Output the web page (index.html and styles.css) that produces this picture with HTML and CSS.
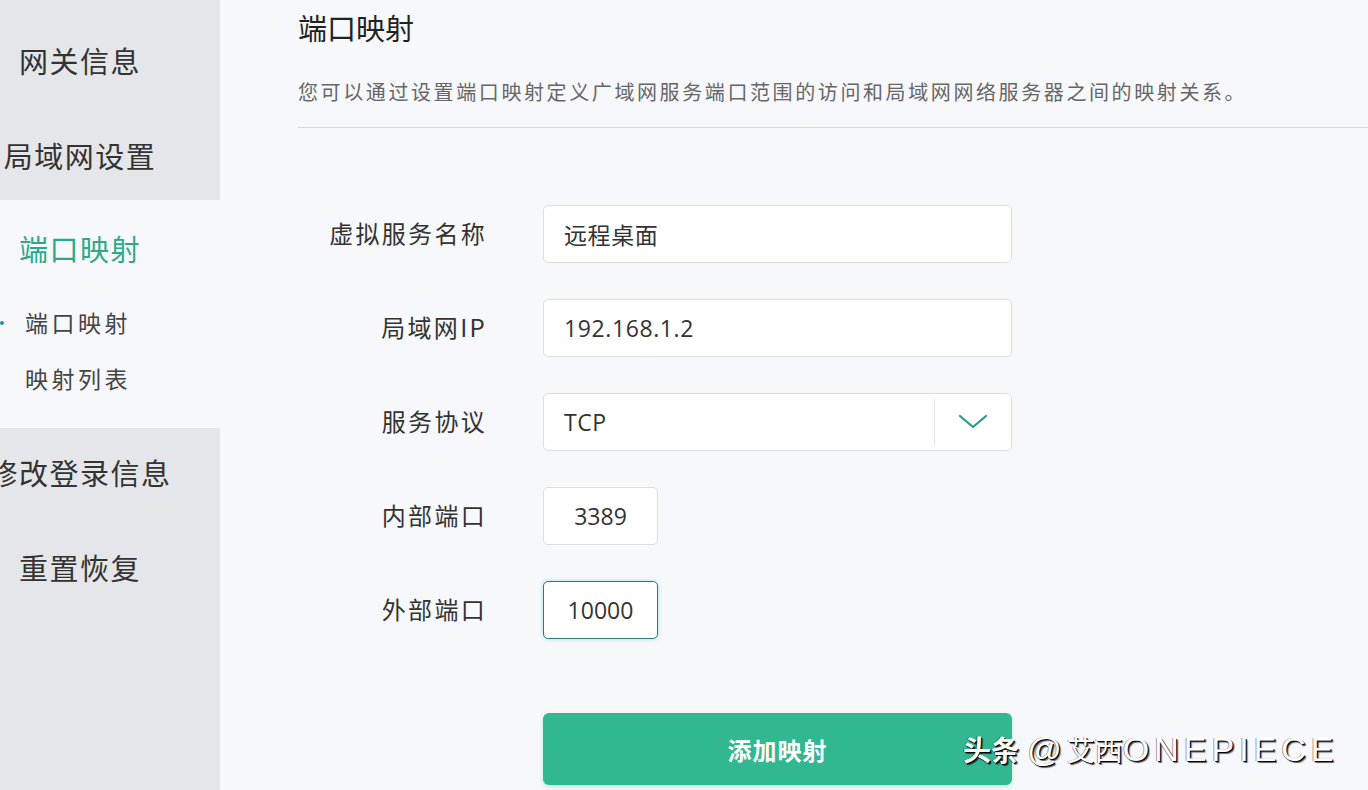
FILE: index.html
```html
<!DOCTYPE html>
<html lang="zh-CN">
<head>
<meta charset="utf-8">
<title>端口映射</title>
<link rel="stylesheet" href="styles.css">
</head>
<body>
<div class="page">
  <aside class="sidebar">
    <div class="group group-top">
      <div class="nav-item">网关信息</div>
      <div class="nav-item">局域网设置</div>
    </div>
    <div class="group group-open">
      <div class="nav-item nav-active">端口映射</div>
      <div class="sub-item sub-current"><span class="dot"></span>端口映射</div>
      <div class="sub-item">映射列表</div>
    </div>
    <div class="group group-bottom">
      <div class="nav-item nav-first">修改登录信息</div>
      <div class="nav-item">重置恢复</div>
    </div>
  </aside>
  <main class="main">
    <h1 class="title">端口映射</h1>
    <p class="desc">您可以通过设置端口映射定义广域网服务端口范围的访问和局域网网络服务器之间的映射关系。</p>
    <div class="divider"></div>
    <form class="form">
      <label class="label">虚拟服务名称</label>
      <div class="field field-wide">远程桌面</div>
      <label class="label">局域网IP</label>
      <div class="field field-wide">192.168.1.2</div>
      <label class="label">服务协议</label>
      <div class="field field-wide select">
        <span class="select-value">TCP</span>
        <span class="select-arrow">
          <svg width="30" height="16" viewBox="0 0 30 16"><path d="M2 2 L15 13 L28 2" fill="none" stroke="#2a9a8e" stroke-width="2.2" stroke-linecap="round" stroke-linejoin="round"/></svg>
        </span>
      </div>
      <label class="label">内部端口</label>
      <div class="field field-small">3389</div>
      <label class="label">外部端口</label>
      <div class="field field-small field-focus">10000</div>
      <button type="button" class="btn">添加映射</button>
    </form>
  </main>
</div>
<div class="watermark"><b>头条</b> <span class="wm-latin">@</span>艾西<span class="wm-latin">ONEPIECE</span></div>
</body>
</html>
```

FILE: styles.css
```css
html, body {
  margin: 0;
  padding: 0;
  background: #f7f8fb;
  font-family: "Noto Sans CJK SC", "Open Sans", sans-serif;
  color: #333;
  overflow: hidden;
}
.page {
  display: flex;
  width: 1368px;
  height: 790px;
  overflow: hidden;
}
.sidebar {
  width: 220px;
  flex: none;
  display: flex;
  flex-direction: column;
  background: #f7f8fb;
}
.group-top {
  background: #e5e6e9;
  height: 200px;
  padding-top: 12px;
  box-sizing: border-box;
}
.group-open {
  height: 228px;
}
.group-bottom {
  background: #e5e6e9;
  flex: 1;
}
.nav-item {
  width: 160px;
  height: 95px;
  display: flex;
  align-items: center;
  justify-content: center;
  white-space: nowrap;
  font-size: 29px;
  letter-spacing: 1.5px;
  color: #333;
}
.nav-first {
  margin-top: -4px;
}
.nav-active {
  height: 96px;
  color: #2ea88a;
}
.sub-item {
  height: 56px;
  display: flex;
  align-items: center;
  padding-left: 25px;
  font-size: 23px;
  letter-spacing: 3.5px;
  color: #444;
  position: relative;
  margin-top: -2px;
  margin-bottom: 2px;
}
.dot {
  position: absolute;
  left: 0;
  top: 27px;
  width: 4px;
  height: 4px;
  border-radius: 50%;
  background: #2a8ea0;
}
.main {
  flex: 1;
  padding-left: 78px;
}
.title {
  margin: 8px 0 0;
  height: 38px;
  line-height: 38px;
  font-size: 29px;
  font-weight: normal;
  color: #222;
}
.desc {
  margin: 31px 0 0;
  height: 30px;
  line-height: 30px;
  font-size: 20px;
  letter-spacing: 2.6px;
  color: #666;
  white-space: nowrap;
}
.divider {
  margin-top: 20px;
  height: 1px;
  background: #d6d9de;
}
.form {
  margin-top: 77px;
  display: grid;
  grid-template-columns: 187px 469px;
  column-gap: 58px;
  row-gap: 36px;
  align-items: center;
}
.label {
  justify-self: end;
  font-size: 24px;
  letter-spacing: 2.3px;
  color: #333;
  white-space: nowrap;
  margin-top: -4px;
  margin-right: -2px;
}
.field {
  height: 58px;
  box-sizing: border-box;
  background: #fff;
  border: 1px solid #dcdfe4;
  border-radius: 5px;
  display: flex;
  align-items: center;
  font-family: "Open Sans", "Noto Sans CJK SC", sans-serif;
  font-size: 23px;
  color: #333;
}
.field-wide {
  width: 469px;
  padding-left: 20px;
  letter-spacing: 0.6px;
}
.field-small {
  width: 115px;
  justify-content: center;
}
.field-focus {
  border: 1.5px solid #2d7c7a;
  box-shadow: 0 0 4px rgba(60, 200, 200, 0.45);
}
.select {
  padding-left: 20px;
}
.select-value {
  flex: 1;
}
.select-arrow {
  width: 76px;
  height: 46px;
  border-left: 1px solid #e3e5e8;
  display: flex;
  align-items: center;
  justify-content: center;
}
.btn {
  grid-column: 2;
  margin-top: 38px;
  width: 469px;
  height: 72px;
  border: none;
  border-radius: 6px;
  background: #31b890;
  box-shadow: 0 2px 4px rgba(60, 210, 160, 0.35);
  color: #fff;
  font-family: "Noto Sans CJK SC", sans-serif;
  font-size: 24px;
  font-weight: bold;
  letter-spacing: 1px;
}
.watermark {
  position: absolute;
  left: 963px;
  top: 728px;
  font-family: "Noto Sans CJK SC", sans-serif;
  font-size: 28px;
  line-height: 42px;
  color: #fff;
  white-space: nowrap;
  text-shadow: 1px 1px 0 #000, 2px 2px 1px rgba(0,0,0,0.6), -1px 0 0 rgba(0,0,0,0.4);
}
.watermark b {
  font-weight: bold;
  margin-right: 2px;
}
.wm-latin {
  font-family: "Liberation Sans", sans-serif;
  font-size: 34px;
  letter-spacing: 5px;
}
```
